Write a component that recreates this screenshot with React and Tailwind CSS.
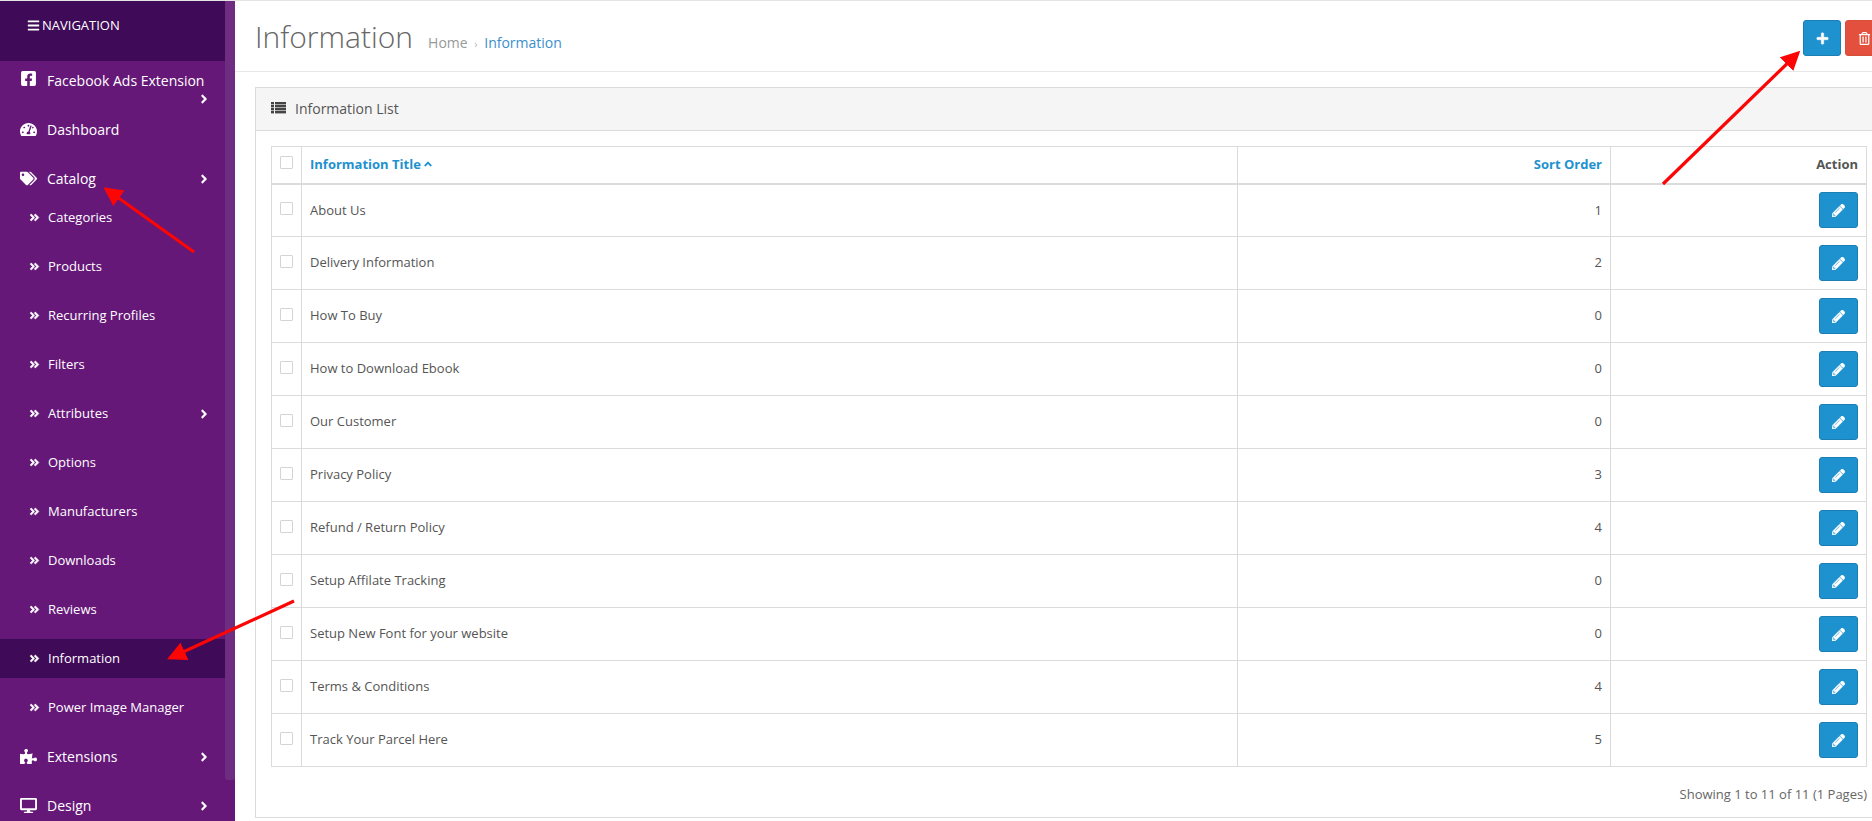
import React from 'react';
import {
  FaBars,
  FaFacebookSquare,
  FaTachometerAlt,
  FaTags,
  FaPuzzlePiece,
  FaDesktop,
  FaAngleRight,
  FaAngleDoubleRight,
  FaAngleUp,
  FaPlus,
  FaRegTrashAlt,
  FaPencilAlt,
} from 'react-icons/fa';

const SUB_ITEMS = [
  { name: 'Categories' },
  { name: 'Products' },
  { name: 'Recurring Profiles' },
  { name: 'Filters' },
  { name: 'Attributes', more: true },
  { name: 'Options' },
  { name: 'Manufacturers' },
  { name: 'Downloads' },
  { name: 'Reviews' },
  { name: 'Information', active: true },
  { name: 'Power Image Manager' },
];

const ROWS = [
  ['About Us', 1],
  ['Delivery Information', 2],
  ['How To Buy', 0],
  ['How to Download Ebook', 0],
  ['Our Customer', 0],
  ['Privacy Policy', 3],
  ['Refund / Return Policy', 4],
  ['Setup Affilate Tracking', 0],
  ['Setup New Font for your website', 0],
  ['Terms & Conditions', 4],
  ['Track Your Parcel Here', 5],
];

const MainItem = ({ icon: Icon, label, more, className = 'h-[49px] items-center', angleClass = 'top-1/2 -translate-y-1/2' }) => (
  <div className={`relative flex pl-5 text-[14px] text-white ${className}`}>
    <Icon size={17} className="w-[17px] shrink-0" />
    <span className="ml-[10px]">{label}</span>
    {more && <FaAngleRight size={14} className={`absolute right-[14px] ${angleClass}`} />}
  </div>
);

const SubItem = ({ name, more, active }) => (
  <div className={`relative flex h-[39px] mb-[10px] items-center pl-[29px] text-[13px] text-white ${active ? 'bg-[#3f0a57]' : ''}`}>
    <FaAngleDoubleRight size={11} className="shrink-0 stroke-white stroke-[24px]" />
    <span className="ml-[8px]">{name}</span>
    {more && <FaAngleRight size={14} className="absolute right-[14px] top-1/2 -translate-y-1/2" />}
  </div>
);

const Checkbox = () => (
  <span className="mx-auto mb-[4px] block h-[13px] w-[13px] rounded-[1px] border border-[#d4d4d4] bg-white" />
);

const ListIcon = () => (
  <svg width="15" height="12" viewBox="0 0 15 12" className="mr-[9px] fill-[#444]">
    {[0, 3, 6, 9].map((y) => (
      <g key={y}>
        <rect x="0" y={y} width="3" height="2.4" />
        <rect x="4" y={y} width="11" height="2.4" />
      </g>
    ))}
  </svg>
);

const Arrow = ({ x1, y1, x2, y2, id }) => (
  <line x1={x1} y1={y1} x2={x2} y2={y2} stroke="#fb0505" strokeWidth="3.2" markerEnd={`url(#${id})`} />
);

export default function App() {
  return (
    <div className="relative flex h-screen overflow-hidden bg-white font-['Open_Sans',sans-serif] text-[#555]">
      {/* sidebar */}
      <aside className="flex h-full w-[235px] shrink-0 bg-[#651878]">
        <div className="w-[225px] shrink-0 overflow-hidden">
          <div className="flex h-[61px] items-start bg-[#3f0a57] pl-[27px] pt-[16px] text-[13px] leading-[18px] text-white">
            <FaBars size={13} className="mr-[2px] mt-[3px]" />
            NAVIGATION
          </div>
          <MainItem icon={FaFacebookSquare} label="Facebook Ads Extension" more className="h-[44px] items-start pt-[9px]" angleClass="top-[31px]" />
          <MainItem icon={FaTachometerAlt} label="Dashboard" />
          <MainItem icon={FaTags} label="Catalog" more />
          <div className="-mb-[5px] -mt-[5px]">
            {SUB_ITEMS.map((item) => (
              <SubItem key={item.name} {...item} />
            ))}
          </div>
          <MainItem icon={FaPuzzlePiece} label="Extensions" more />
          <MainItem icon={FaDesktop} label="Design" more />
        </div>
        <div className="h-[780px] w-[10px] rounded-b-[3px] bg-[#6e2d80]" />
      </aside>

      {/* main */}
      <main className="w-[1668px] shrink-0">
        <div className="flex h-[72px] items-start justify-between border-b border-[#e7e7e7] px-[20px] pt-[20px]">
          <div className="-mt-[1px] flex items-baseline">
            <h1 className="text-[30px] font-light leading-[36px] text-[#666]">Information</h1>
            <div className="ml-[15px] text-[14px] text-[#999]">
              Home <span className="mx-[3px] text-[11px] text-[#bbb]">›</span> <span className="text-[#3a8fcb]">Information</span>
            </div>
          </div>
          <div className="flex gap-[4px]">
            <button className="flex h-[36px] w-[38px] items-center justify-center rounded-[3px] border border-[#1b7fb4] bg-[#1e91cf] text-white">
              <FaPlus size={13} className="stroke-white stroke-[20px]" />
            </button>
            <button className="flex h-[36px] w-[38px] items-center justify-center rounded-[3px] border border-[#d5503a] bg-[#e3503e] text-white">
              <FaRegTrashAlt size={13} />
            </button>
          </div>
        </div>

        <div className="mx-[20px] mt-[15px] border border-[#dbdbdb]">
          <div className="flex h-[43px] items-center border-b border-[#dbdbdb] bg-[#f5f5f5] pb-[2px] pl-[15px] text-[14px] text-[#555]">
            <ListIcon />
            Information List
          </div>
          <div className="px-[15px] pt-[15px]">
            <table className="w-full table-fixed border-collapse text-[13px]">
              <thead>
                <tr className="h-[37px] border-b-2 border-[#dbdbdb]">
                  <th className="w-[30px] border border-b-0 border-[#dbdbdb] align-middle">
                    <Checkbox />
                  </th>
                  <th className="w-[936px] border border-b-0 border-[#dbdbdb] px-[8px] text-left font-bold text-[#1e91cf]">
                    Information Title <FaAngleUp size={12} className="-ml-[2px] inline align-[-1px]" />
                  </th>
                  <th className="w-[373px] border border-b-0 border-[#dbdbdb] px-[8px] text-right font-bold text-[#1e91cf]">Sort Order</th>
                  <th className="border border-b-0 border-[#dbdbdb] px-[8px] text-right font-bold text-[#555]">Action</th>
                </tr>
              </thead>
              <tbody>
                {ROWS.map(([title, sort]) => (
                  <tr key={title} className="h-[53px]">
                    <td className="border border-[#dbdbdb] align-middle">
                      <Checkbox />
                    </td>
                    <td className="border border-[#dbdbdb] px-[8px]">{title}</td>
                    <td className="border border-[#dbdbdb] px-[8px] text-right">{sort}</td>
                    <td className="border border-[#dbdbdb] px-[8px]">
                      <button className="ml-auto flex h-[36px] w-[39px] items-center justify-center rounded-[3px] border border-[#1b7fb4] bg-[#1e91cf] text-white">
                        <FaPencilAlt size={13} className="stroke-white stroke-[16px]" />
                      </button>
                    </td>
                  </tr>
                ))}
              </tbody>
            </table>
            <div className="h-[50px] pt-[18px] text-right text-[13px] leading-[18px] text-[#666]">
              Showing 1 to 11 of 11 (1 Pages)
            </div>
          </div>
        </div>
      </main>

      {/* annotation arrows drawn over the screenshot */}
      <svg className="pointer-events-none absolute left-0 top-0 h-full w-full">
        <defs>
          <marker id="arrowhead" markerWidth="6" markerHeight="6" refX="5" refY="3" orient="auto">
            <path d="M0 0 L6 3 L0 6 Z" fill="#fb0505" />
          </marker>
        </defs>
        <Arrow id="arrowhead" x1={194} y1={252} x2={106} y2={189} />
        <Arrow id="arrowhead" x1={294} y1={601} x2={170} y2={658} />
        <Arrow id="arrowhead" x1={1663} y1={184} x2={1798} y2={53} />
      </svg>
      <div className="absolute left-0 right-0 top-0 h-[1px] bg-[#e5e5e5]" />
    </div>
  );
}
